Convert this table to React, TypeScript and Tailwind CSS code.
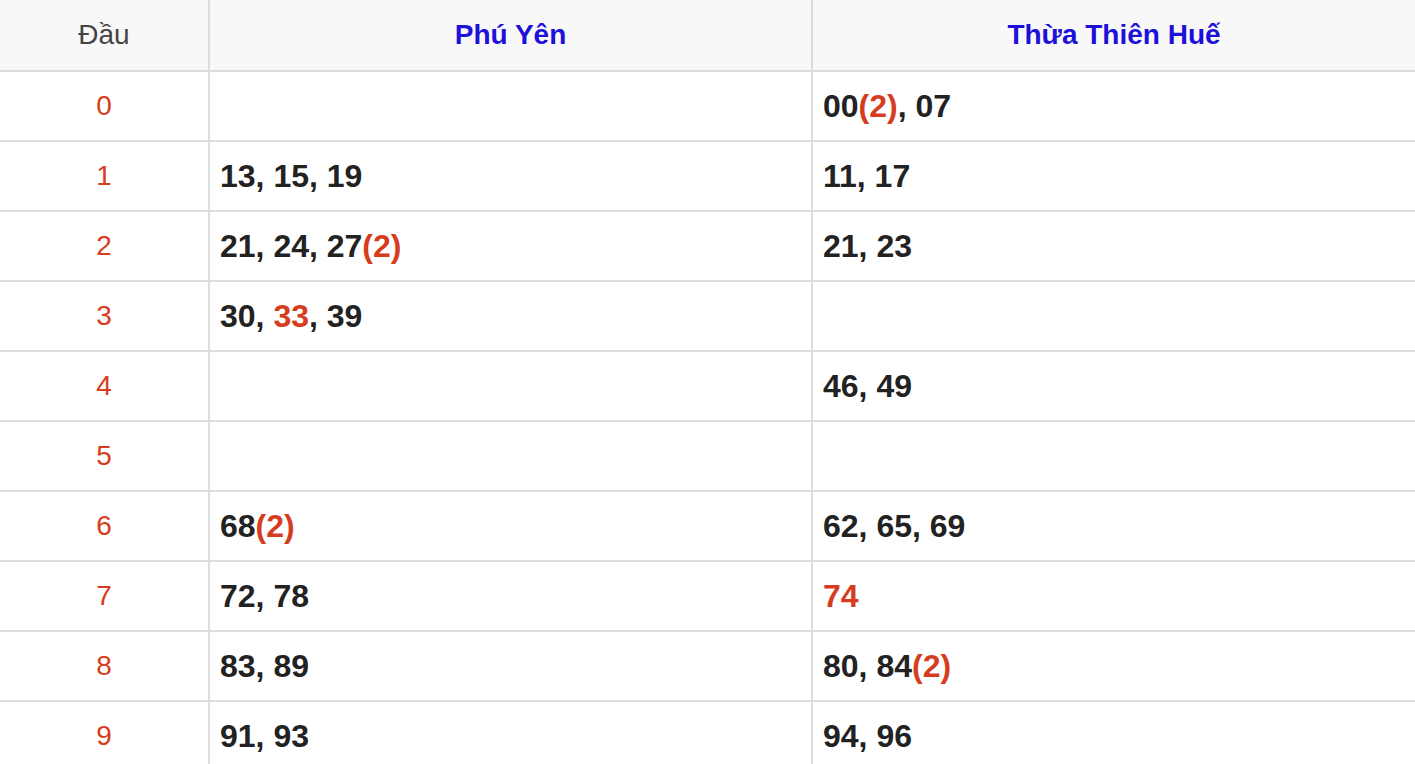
import React from "react";

type Part = { t: string; red?: boolean };

const RED = "text-[#d63d20]";

// each row: [label, phu yen parts, hue parts]
const rows: { dau: string; py: Part[]; hue: Part[] }[] = [
  { dau: "0", py: [], hue: [{ t: "00" }, { t: "(2)", red: true }, { t: ", 07" }] },
  { dau: "1", py: [{ t: "13, 15, 19" }], hue: [{ t: "11, 17" }] },
  { dau: "2", py: [{ t: "21, 24, 27" }, { t: "(2)", red: true }], hue: [{ t: "21, 23" }] },
  { dau: "3", py: [{ t: "30, " }, { t: "33", red: true }, { t: ", 39" }], hue: [] },
  { dau: "4", py: [], hue: [{ t: "46, 49" }] },
  { dau: "5", py: [], hue: [] },
  { dau: "6", py: [{ t: "68" }, { t: "(2)", red: true }], hue: [{ t: "62, 65, 69" }] },
  { dau: "7", py: [{ t: "72, 78" }], hue: [{ t: "74", red: true }] },
  { dau: "8", py: [{ t: "83, 89" }], hue: [{ t: "80, 84" }, { t: "(2)", red: true }] },
  { dau: "9", py: [{ t: "91, 93" }], hue: [{ t: "94, 96" }] },
];

function Nums({ parts }: { parts: Part[] }) {
  return (
    <div className="flex items-center border-l-2 border-[#dcdcdc] pl-[10px] text-[32px] font-bold text-[#222]">
      <span className="whitespace-pre">
        {parts.map((p, i) => (
          <span key={i} className={p.red ? RED : ""}>
            {p.t}
          </span>
        ))}
      </span>
    </div>
  );
}

export default function App() {
  return (
    <div className="min-h-screen w-full bg-white font-['Liberation_Sans',Arial,sans-serif]">
      <div className="grid grid-cols-[208px_603px_1fr] h-[70px] bg-[#f8f8f8]">
        <div className="flex items-center justify-center text-[28px] text-[#444]">Đầu</div>
        <div className="flex items-center justify-center border-l-2 border-[#dcdcdc] text-[28px] font-bold text-[#1d10d9]">
          Phú Yên
        </div>
        <div className="flex items-center justify-center border-l-2 border-[#dcdcdc] text-[28px] font-bold text-[#1d10d9]">
          Thừa Thiên Huế
        </div>
      </div>
      {rows.map((r) => (
        <div key={r.dau} className="grid grid-cols-[208px_603px_1fr] h-[70px] border-t-2 border-[#dcdcdc]">
          <div className={`flex items-center justify-center text-[28px] ${RED}`}>{r.dau}</div>
          <Nums parts={r.py} />
          <Nums parts={r.hue} />
        </div>
      ))}
    </div>
  );
}
